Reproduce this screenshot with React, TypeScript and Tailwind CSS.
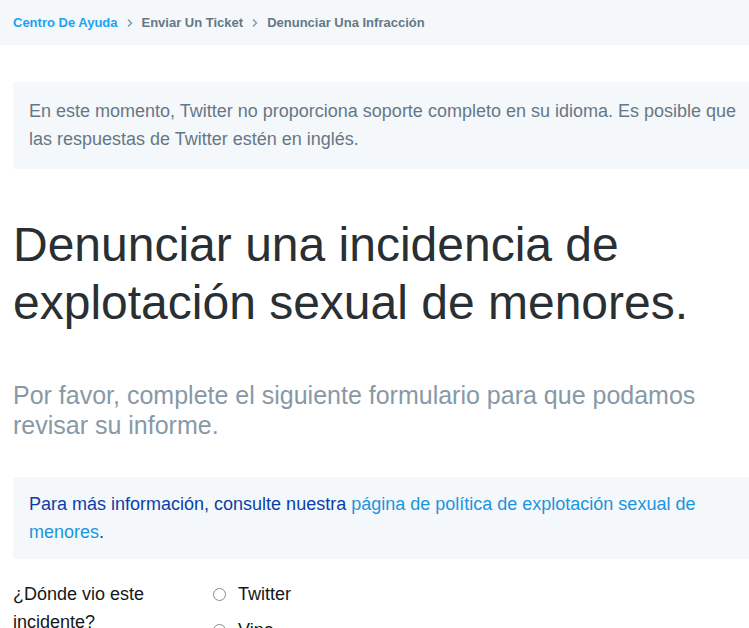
export default function App() {
  return (
    <div className="w-[749px] h-[628px] overflow-hidden bg-white font-['Liberation_Sans',Arial,sans-serif]">
      {/* Breadcrumb */}
      <div className="h-[45px] bg-[#f5f8fa] flex items-center pl-[13px] text-[13px] font-bold">
        <a href="#" className="text-[#1da1f2]">Centro De Ayuda</a>
        <span className="mx-[8px]">
          <svg width="8" height="10" viewBox="0 0 8 10" fill="none" stroke="#8899a6" strokeWidth="1.5">
            <path d="M2 1.5 L5.5 5 L2 8.5" />
          </svg>
        </span>
        <a href="#" className="text-[#657786]">Enviar Un Ticket</a>
        <span className="mx-[8px]">
          <svg width="8" height="10" viewBox="0 0 8 10" fill="none" stroke="#8899a6" strokeWidth="1.5">
            <path d="M2 1.5 L5.5 5 L2 8.5" />
          </svg>
        </span>
        <span className="text-[#657786]">Denunciar Una Infracción</span>
      </div>

      <div className="pl-[13px] w-[780px]">
        {/* Language notice */}
        <div className="mt-[37px] bg-[#f5f8fa] rounded-[3px] px-[16px] pt-[15px] pb-[16px] text-[18px] leading-[28px] text-[#657786] whitespace-nowrap">
          En este momento, Twitter no proporciona soporte completo en su idioma. Es posible que
          <br />
          las respuestas de Twitter estén en inglés.
        </div>

        {/* Title */}
        <h1 className="mt-[47px] text-[48px] leading-[58px] text-[#292f33] font-normal">
          Denunciar una incidencia de
          <br />
          explotación sexual de menores.
        </h1>

        <p className="mt-[48px] text-[25px] leading-[30px] text-[#8899a6]">
          Por favor, complete el siguiente formulario para que podamos
          <br />
          revisar su informe.
        </p>

        {/* Info box */}
        <div className="mt-[37px] bg-[#f5f8fa] rounded-[3px] px-[16px] pt-[13px] pb-[13px] text-[18px] leading-[28px] text-[#0a3fa8] whitespace-nowrap">
          Para más información, consulte nuestra{' '}
          <a href="#" className="text-[#1b95e0]">página de política de explotación sexual de</a>
          <br />
          <a href="#" className="text-[#1b95e0]">menores</a>.
        </div>

        {/* Form row */}
        <div className="mt-[21px] flex text-[18px] leading-[28px] text-[#14171a]">
          <div className="w-[200px] pr-[40px]">¿Dónde vio este incidente?</div>
          <div className="flex flex-col">
            <label className="flex items-center gap-[12px]">
              <span className="w-[13px] h-[13px] rounded-full border border-[#8a8a8a] bg-white" />
              <span>Twitter</span>
            </label>
            <label className="flex items-center gap-[12px] mt-[8px]">
              <span className="w-[13px] h-[13px] rounded-full border border-[#8a8a8a] bg-white" />
              <span>Vine</span>
            </label>
          </div>
        </div>
      </div>
    </div>
  );
}
